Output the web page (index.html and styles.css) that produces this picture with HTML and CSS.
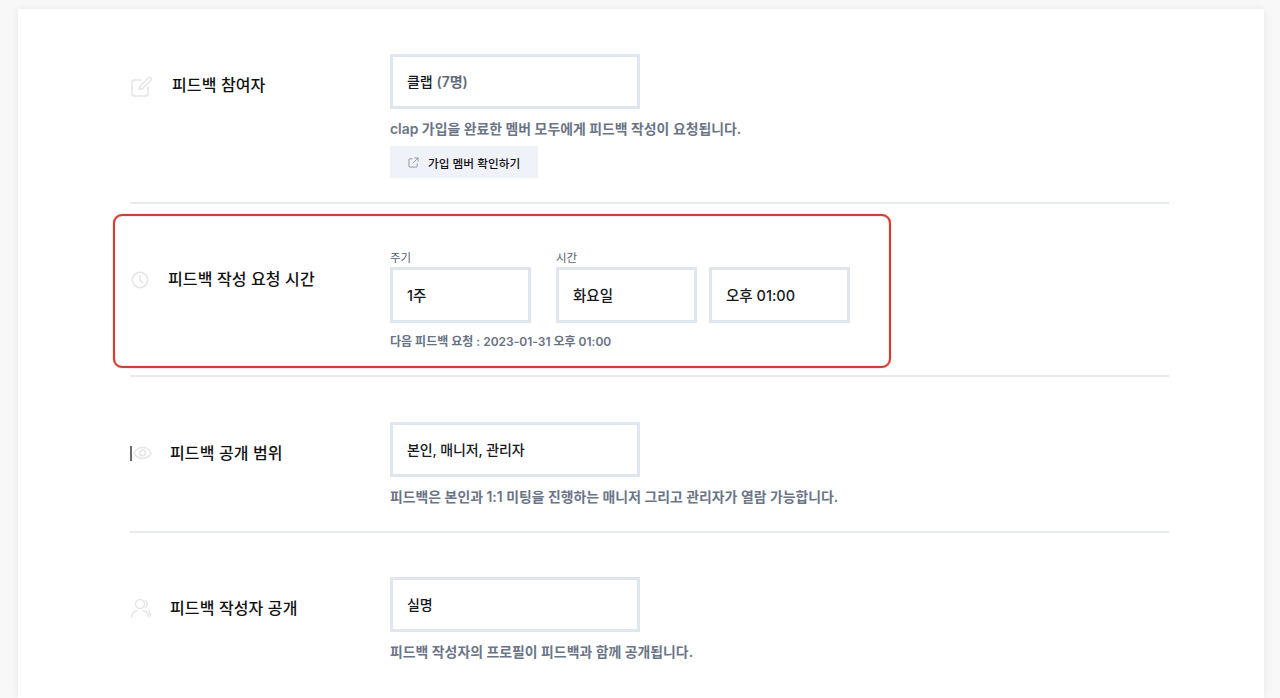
FILE: index.html
```html
<!DOCTYPE html>
<html lang="ko">
<head>
<meta charset="utf-8">
<title>피드백 설정</title>
<link rel="stylesheet" href="styles.css">
</head>
<body>
<main class="card">
  <section class="row row-first">
    <div class="head head-a">
      <svg class="icon icon-edit" viewBox="0 0 22 22"><path d="M11 4H4.500A2.500 2.500 0 0 0 2 6.500v11A2.500 2.500 0 0 0 4.500 20h11a2.500 2.500 0 0 0 2.500-2.500V11"/><path d="M18.500 1.800a1.700 1.700 0 0 1 2.400 2.400L12.500 12.600l-3.200.8.800-3.200z"/></svg>
      <h2 class="title">피드백 참여자</h2>
    </div>
    <div class="body">
      <div class="field field-wide">클랩 <span class="muted">(7명)</span></div>
      <p class="help">clap 가입을 완료한 멤버 모두에게 피드백 작성이 요청됩니다.</p>
      <button class="link-btn" type="button">
        <svg class="ext" viewBox="0 0 12 12"><path d="M5 2H2a1 1 0 0 0-1 1v7a1 1 0 0 0 1 1h7a1 1 0 0 0 1-1V7"/><path d="M7 1h4v4M11 1 5.500 6.500"/></svg>
        가입 멤버 확인하기
      </button>
    </div>
  </section>

  <section class="row row-time">
    <div class="highlight"></div>
    <div class="head head-b">
      <svg class="icon icon-clock" viewBox="0 0 20 20"><circle cx="10" cy="10" r="8.500"/><path d="M10 5v5.500l3 2.500"/></svg>
      <h2 class="title">피드백 작성 요청 시간</h2>
    </div>
    <div class="body">
      <div class="time-grid">
        <div class="time-col">
          <span class="cap">주기</span>
          <div class="field field-time">1주</div>
        </div>
        <div class="time-col">
          <span class="cap">시간</span>
          <div class="time-pair">
            <div class="field field-time">화요일</div>
            <div class="field field-time">오후 01:00</div>
          </div>
        </div>
      </div>
      <p class="next">다음 피드백 요청 : 2023-01-31 오후 01:00</p>
    </div>
  </section>

  <section class="row row-scope">
    <div class="head head-c">
      <svg class="icon icon-eye" viewBox="0 0 22 22"><path d="M2 11c2.200-3.800 5.200-5.700 9-5.700s6.800 1.900 9 5.700c-2.200 3.800-5.200 5.700-9 5.700S4.200 14.800 2 11z"/><circle cx="11" cy="11" r="3"/></svg>
      <i class="tick"></i>
      <h2 class="title">피드백 공개 범위</h2>
    </div>
    <div class="body">
      <div class="field field-wide">본인, 매니저, 관리자</div>
      <p class="help">피드백은 본인과 1:1 미팅을 진행하는 매니저 그리고 관리자가 열람 가능합니다.</p>
    </div>
  </section>

  <section class="row row-last">
    <div class="head head-d">
      <svg class="icon" viewBox="0 0 22 22"><circle cx="10" cy="7" r="4.500"/><path d="M1.500 20c0-3.500 2.500-5.800 5.500-6.300M13 13.700c3.300.5 5.500 2.800 5.500 6.300"/><path d="M15.500 3.500a4.500 4.500 0 0 1 0 7M19 14c1 1.200 1.500 3 1.500 5"/></svg>
      <h2 class="title">피드백 작성자 공개</h2>
    </div>
    <div class="body">
      <div class="field field-wide">실명</div>
      <p class="help">피드백 작성자의 프로필이 피드백과 함께 공개됩니다.</p>
    </div>
  </section>
</main>
</body>
</html>
```

FILE: styles.css
```css
* { box-sizing: border-box; }
html, body { margin: 0; height: 100%; overflow: hidden; }
body {
  background: #f8f8f8;
  font-family: Inter, "Noto Sans CJK KR", sans-serif;
  color: #16181d;
}
.card {
  margin: 9px 16px 0 18px;
  padding: 0 95px 0 112px;
  height: 689px;
  overflow: hidden;
  background: #fff;
  box-shadow: 0 0 8px rgba(0, 0, 0, 0.07);
}
.row {
  position: relative;
  display: flex;
  border-bottom: 2px solid #e8ebee;
}
.row-first { height: 195px; padding-top: 45px; }
.row-time { height: 173px; padding-top: 44px; }
.row-scope { height: 156px; padding-top: 45px; }
.row-last { border-bottom: 0; padding-top: 44px; }
.head { width: 260px; flex: none; display: flex; align-items: center; align-self: flex-start; position: relative; }
.head-a { height: 62px; gap: 20px; }
.head-b { height: 62px; gap: 19px; }
.head-c { height: 62px; gap: 17px; }
.head-d { height: 62px; gap: 18px; }
.title { margin: 0; font-size: 16px; font-weight: 500; line-height: 24px; letter-spacing: 0.12px; color: #111; }
.icon {
  width: 22px; height: 22px; flex: none;
  fill: none; stroke: #e6e6e6; stroke-width: 1.600; stroke-linecap: round; stroke-linejoin: round;
}
.icon-edit { margin-top: 3px; }
.icon-clock { width: 18px; height: 18px; margin-top: 2px; margin-left: 1px; stroke-width: 1.700; }
.icon-eye { width: 21px; margin-left: 2px; }
.tick { position: absolute; left: 0; top: 24px; width: 2px; height: 15px; background: #6a6a6a; }
.body { flex: 1; min-width: 0; }
.field {
  display: flex; align-items: center; gap: 4px;
  height: 55px; padding: 0 14px 2px;
  border: 3px solid #dfe6ee;
  background: #fff;
  font-size: 14px; font-weight: 500; color: #16181d;
}
.field-wide { width: 250px; letter-spacing: -0.1px; }
.field-time { width: 141px; height: 56px; font-size: 14.500px; }
.muted { color: #5f6a7a; font-weight: 600; }
.help { margin: 10px 0 0; font-size: 13.900px; font-weight: 600; line-height: 20px; color: #6b7587; }
.link-btn {
  display: flex; align-items: center; gap: 9px;
  width: 148px; height: 32px; margin-top: 7px; padding: 0 0 0 18px;
  border: 0; background: #f0f2fa;
  font: 500 11.700px Inter, "Noto Sans CJK KR", sans-serif;
  color: #111;
}
.ext { width: 11px; height: 11px; flex: none; fill: none; stroke: #8a909a; stroke-width: 1; }
.time-grid { display: flex; gap: 25px; }
.cap { display: block; height: 19px; padding-top: 2px; font-size: 11.500px; line-height: 16px; color: #566070; }
.time-pair { display: flex; gap: 12px; }
.next { margin: 9px 0 0; font-size: 12px; font-weight: 600; line-height: 20px; color: #687284; }
.highlight {
  position: absolute; left: -17px; top: 10px;
  width: 778px; height: 154px;
  border: 2px solid #d13f33;
  border-radius: 9px;
  box-shadow: 0 0 1px #d13f33, inset 0 0 1px #d13f33;
  pointer-events: none;
}
```
